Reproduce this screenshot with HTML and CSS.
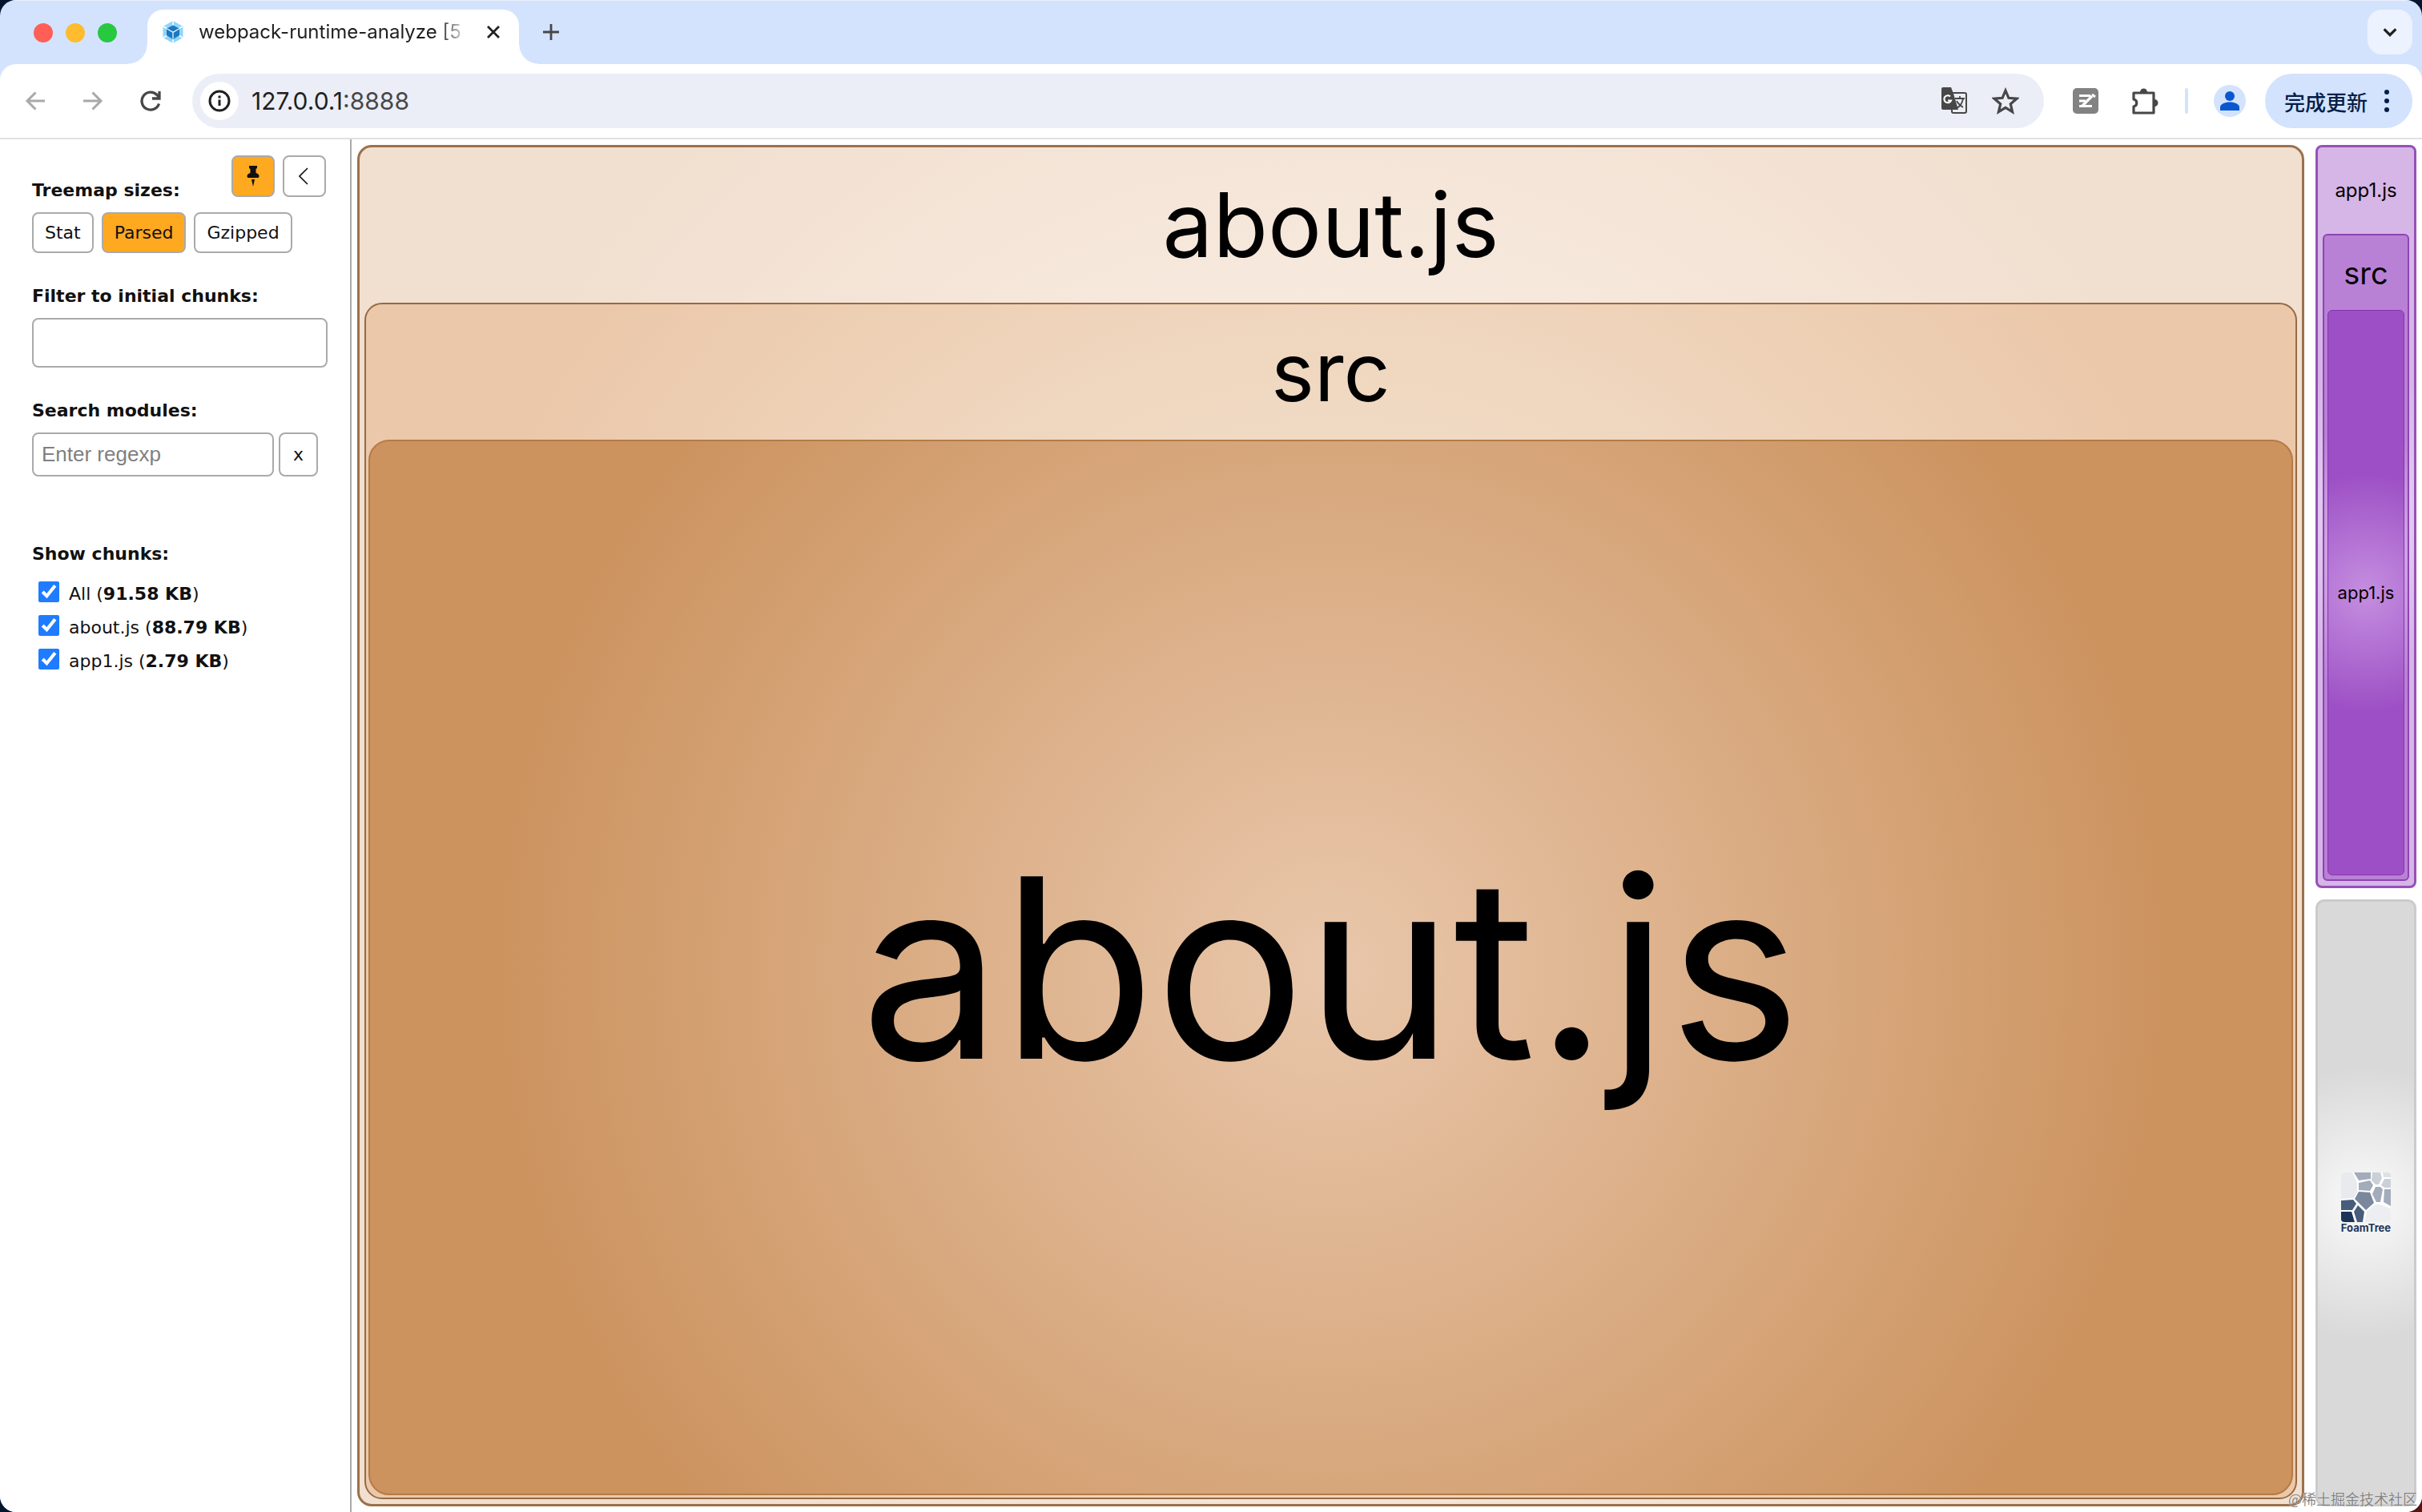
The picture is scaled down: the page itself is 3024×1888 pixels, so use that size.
FILE: index.html
```html
<!DOCTYPE html>
<html lang="zh-CN">
<head>
<meta charset="utf-8">
<title>webpack-runtime-analyze</title>
<link rel="stylesheet" href="styles.css">
</head>
<body>
<div class="window">
  <header class="tabstrip">
    <div class="lights"><span class="light close"></span><span class="light minimise"></span><span class="light zoom"></span></div>
    <div class="tab">
      <svg class="favicon" viewBox="0 0 28 28"><path fill="#8ed6fb" d="M14 0 26.500 7v14L14 28 1.500 21V7z"/><path d="M14 0v7M14 21v7M2 7l5 3M26 7l-5 3M2 21l5-3M26 21l-5-3" stroke="#fff" stroke-width="1.500"/><path fill="#1c78c0" d="m14 5.500 8 4.300v8.500l-8 4.700-8-4.700V9.800z"/><path d="m6.500 10 7.500 4.300L21.500 10M14 14.300V22" fill="none" stroke="#fff" stroke-width="1.200"/></svg>
      <span class="tab-title">webpack-runtime-analyze [5 F</span>
      <button class="icon-button tab-close" aria-label="Close tab"><svg viewBox="0 0 24 24"><path d="m5 5 14 14M19 5 5 19" stroke="#202124" stroke-width="2.800"/></svg></button>
    </div>
    <button class="icon-button new-tab" aria-label="New tab"><svg viewBox="0 0 24 24"><path d="M12 2v20M2 12h20" stroke="#474747" stroke-width="2.800"/></svg></button>
    <button class="icon-button tab-search" aria-label="Search tabs"><svg viewBox="0 0 24 24"><path d="m4 8 8 8 8-8" fill="none" stroke="#1f1f1f" stroke-width="3.500"/></svg></button>
  </header>
  <nav class="toolbar">
    <div class="nav-buttons">
      <button class="icon-button" aria-label="Back"><svg viewBox="0 0 26 26"><path d="M25 13H3M13.500 2.500 3 13l10.500 10.500" fill="none" stroke="#a9a9a9" stroke-width="3"/></svg></button>
      <button class="icon-button" aria-label="Forward"><svg viewBox="0 0 26 26"><path d="M1 13h22M12.500 2.500 23 13 12.500 23.500" fill="none" stroke="#a9a9a9" stroke-width="3"/></svg></button>
      <button class="icon-button" aria-label="Reload"><svg viewBox="0 0 26 26"><path d="M23.500 16.500A11 11 0 1 1 21 5.500l2.500 3M24 1v9h-9" fill="none" stroke="#474747" stroke-width="3.300"/></svg></button>
    </div>
    <div class="omnibox">
      <button class="icon-button site-info" aria-label="Site information"><svg viewBox="0 0 28 28"><circle cx="14" cy="14" r="12" fill="none" stroke="#1f1f1f" stroke-width="3"/><path d="M14 12.500V20M14 7.500v3" stroke="#1f1f1f" stroke-width="3"/></svg></button>
      <span class="url">127.0.0.1<span class="port">:8888</span></span>
      <button class="icon-button" aria-label="Translate"><svg viewBox="0 0 34 34"><rect x="14" y="7" width="18" height="25" rx="2" fill="none" stroke="#474747" stroke-width="2"/><path fill="#474747" d="M3 0h10l3 8 6 20H3a2 2 0 0 1-2-2V2a2 2 0 0 1 2-2z"/><path d="M12 11.500a4.500 4.500 0 1 0 1 5h-4" fill="none" stroke="#fff" stroke-width="2.200"/><path d="M18 14h12M24 11v3M28 14c-1 6-4 10-8 12M20 17c2 4 5 6 8 8" fill="none" stroke="#474747" stroke-width="1.800"/></svg></button>
      <button class="icon-button" aria-label="Bookmark"><svg viewBox="0 0 34 34"><path d="m17 4 3.900 9.300 10 .9-7.600 6.600 2.300 9.800L17 25.400l-8.600 5.200 2.300-9.800-7.600-6.600 10-.9z" fill="none" stroke="#474747" stroke-width="3.200"/></svg></button>
    </div>
    <button class="icon-button extension" aria-label="Notes extension"><svg viewBox="0 0 32 32"><rect width="32" height="32" rx="5" fill="#828282"/><path d="M8 9.500h14M8 16h8M8 22.500h16M24 10 12 22" stroke="#fff" stroke-width="3.200"/><path d="m24 8 4 3" stroke="#fff" stroke-width="3"/></svg></button>
    <button class="icon-button puzzle" aria-label="Extensions"><svg viewBox="0 0 36 36"><path d="M4 8h25v25H4v-8c5-1 5-8 0-9z" fill="none" stroke="#474747" stroke-width="3.200" stroke-linejoin="round"/><path d="M12 7a4.500 4.500 0 0 1 9 0zM30 16a4.500 4.500 0 0 1 0 9z" fill="#474747"/></svg></button>
    <span class="divider"></span>
    <button class="icon-button avatar" aria-label="Profile"><svg viewBox="0 0 24 24"><circle cx="12" cy="6" r="6" fill="#0b57d0"/><path d="M0 24v-4c0-4 6-6.500 12-6.500S24 16 24 20v4z" fill="#0b57d0"/></svg></button>
    <button class="update">完成更新<svg viewBox="0 0 8 28"><circle cx="4" cy="3" r="3"/><circle cx="4" cy="14" r="3"/><circle cx="4" cy="25" r="3"/></svg></button>
  </nav>
  <main class="content">
    <aside class="sidebar">
      <div class="panel-buttons">
        <button class="button square active" aria-label="Pin"><svg viewBox="0 0 16 26"><path d="M3 0h10v3l-1.500 1v5c3 1 4 2 4 4s-1 2-3 2h-9c-2 0-3 0-3-2s1-3 4-4V4L3 3zM6 17h4l-2 9z" fill="#111"/></svg></button>
        <button class="button square" aria-label="Hide sidebar"><svg viewBox="0 0 14 26"><path d="M11 3 1 13l10 10" fill="none" stroke="#111" stroke-width="1.600"/></svg></button>
      </div>
      <section class="group sizes">
        <h2>Treemap sizes:</h2>
        <div class="row size-row"><button class="button">Stat</button><button class="button active">Parsed</button><button class="button">Gzipped</button></div>
      </section>
      <section class="group">
        <label class="heading" for="chunk-filter">Filter to initial chunks:</label>
        <input class="field filter" id="chunk-filter" type="text">
      </section>
      <section class="group search">
        <label class="heading" for="module-search">Search modules:</label>
        <div class="row"><input class="field" id="module-search" type="text" placeholder="Enter regexp"><button class="button clear">x</button></div>
      </section>
      <section class="group">
        <h2>Show chunks:</h2>
        <div class="chunks">
          <label><input type="checkbox" checked><span>All (<b>91.58 KB</b>)</span></label>
          <label><input type="checkbox" checked><span>about.js (<b>88.79 KB</b>)</span></label>
          <label><input type="checkbox" checked><span>app1.js (<b>2.79 KB</b>)</span></label>
        </div>
      </section>
    </aside>
    <section class="treemap">
      <div class="cell about">
        <div class="about-title">about.js</div>
        <div class="cell about-src">
          <div class="src-title">src</div>
          <div class="cell about-leaf">about.js</div>
        </div>
      </div>
      <div class="side">
        <div class="cell app">
          <div class="app-title">app1.js</div>
          <div class="cell app-src">
            <div class="app-src-title">src</div>
            <div class="cell app-leaf">app1.js</div>
          </div>
        </div>
        <div class="cell brand">
          <svg class="foam" viewBox="0 0 62 62"><defs><clipPath id="foam-clip"><rect width="62" height="62" rx="4"/></clipPath></defs><g clip-path="url(#foam-clip)"><rect width="62" height="62" fill="#fff"/><path fill="#e8eaed" d="M0 0h14l6 13v11l-4 8-16 1z"/><path fill="#a2acba" d="M16 0h21v8l-15 2z"/><path fill="#cbd0d8" d="M39 0h10l2 7-4 8h-4l-5-5z"/><path fill="#dde1e6" d="M52 0h10v6h-9z"/><path fill="#cbd0d8" d="M54 8h8v11h-8l-4-3z"/><path fill="#a2acba" d="m22 13 14-3 4 6-4 7-14-1zM43 18h6l3 3-3 16h-5l-5-10zM54 21h8v21l-9-5z"/><path fill="#7a879c" d="m22 24 14 1 5 13-10 9-14-14z"/><path fill="#485d7b" d="m0 35 15-1 4 5-5 8H0zM21 41l8 8-2 13h-7l-4-13z"/><path fill="#1d3459" d="M0 49h13l4 13H0z"/><path fill="#eceef1" d="m32 49 10-9h7l13 5v17H29z"/></g></svg>
          <span class="foam-name">FoamTree</span>
        </div>
      </div>
    </section>
  </main>
  <div class="watermark">@稀土掘金技术社区</div>
</div>
</body>
</html>
```
FILE: styles.css
```css
* { box-sizing: border-box; }
html { height: 100%; background: radial-gradient(circle at 100% 100%, #5a1410 0, #04162e 200px); }
body { margin: 0; height: 100%; font-family: Inter, "Noto Sans CJK SC", sans-serif; color: #111; }
button { font: inherit; color: inherit; border: 0; background: none; padding: 0; margin: 0; }
svg { display: block; }
h2 { margin: 0; }

.window { position: relative; height: 100%; display: flex; flex-direction: column; background: #d3e3fd; border-radius: 20px; overflow: hidden; }
.icon-button { display: flex; align-items: center; justify-content: center; flex: none; }
.icon-button svg { width: 100%; height: 100%; }

.tabstrip { flex: none; height: 80px; display: flex; align-items: flex-start; padding: 11px 12px 0 42px; border-top: 1px solid #eaf1fe; }
.lights { display: flex; gap: 16px; padding-top: 17px; width: 142px; }
.light { width: 24px; height: 24px; border-radius: 50%; }
.close { background: #ff5f57; }
.minimise { background: #febc2e; }
.zoom { background: #28c840; }
.tab { position: relative; width: 464px; height: 68px; display: flex; align-items: center; padding: 0 20px 12px 18px; background: #fff; border-radius: 20px 20px 0 0; }
.tab::before, .tab::after { content: ""; position: absolute; bottom: 0; width: 24px; height: 24px; }
.tab::before { left: -24px; background: radial-gradient(circle at 0 0, transparent 23px, #fff 24px); }
.tab::after { right: -24px; background: radial-gradient(circle at 100% 0, transparent 23px, #fff 24px); }
.favicon { width: 28px; height: 28px; flex: none; }
.tab-title { flex: 1; margin-left: 18px; font-size: 24px; line-height: 32px; white-space: nowrap; overflow: hidden; color: #1f1f1f; -webkit-mask-image: linear-gradient(90deg, #000 300px, transparent 336px); mask-image: linear-gradient(90deg, #000 300px, transparent 336px); }
.tab-close { width: 24px; height: 24px; }
.new-tab { width: 24px; height: 24px; margin: 16px 0 0 28px; }
.tab-search { width: 56px; height: 56px; margin-left: auto; padding: 17px; border-radius: 18px; background: #ecf2fe; }

.toolbar { flex: none; height: 94px; display: flex; align-items: center; padding: 0 12px 0 31px; background: #fff; border-radius: 20px 20px 0 0; border-bottom: 2px solid #e1e1e1; }
.nav-buttons { display: flex; gap: 46px; width: 209px; }
.nav-buttons .icon-button { width: 26px; height: 26px; }
.omnibox { flex: 1; height: 68px; display: flex; align-items: center; padding: 0 31px 0 10px; background: #ebeef7; border-radius: 34px; gap: 30px; }
.omnibox .icon-button { width: 34px; height: 34px; }
.omnibox .site-info { width: 48px; height: 48px; padding: 10px; border-radius: 50%; background: #fff; }
.url { flex: 1; margin-left: -14px; font-size: 30px; color: #1f1f1f; }
.port { color: #474747; }
.extension { width: 32px; height: 32px; margin-left: 36px; }
.puzzle { width: 36px; height: 36px; margin-left: 40px; }
.divider { width: 4px; height: 32px; margin-left: 32px; border-radius: 2px; background: #d3e3fd; }
.avatar { width: 40px; height: 40px; margin-left: 32px; padding: 8px; border-radius: 50%; background: #d3e3fd; }
.update { width: 184px; height: 68px; margin-left: 24px; display: flex; align-items: center; gap: 20px; padding-left: 24px; border-radius: 34px; background: #d3e3fd; color: #041e49; font: 500 26px "Noto Sans CJK SC", sans-serif; white-space: nowrap; }
.update svg { width: 8px; height: 28px; fill: #041e49; }

.content { flex: 1; min-height: 0; display: flex; background: #fff; }
.sidebar { position: relative; flex: none; width: 439px; padding: 51px 28px 0 40px; border-right: 2px solid #aaa; font: 22px/26px "DejaVu Sans", sans-serif; }
.panel-buttons { position: absolute; top: 20px; right: 30px; display: flex; gap: 10px; }
.button { height: 51px; padding: 0 14px; border: 2px solid #aaa; border-radius: 8px; background: #fff; }
.active { background: #ffa921; }
.square { width: 54px; height: 52px; padding: 0; display: flex; align-items: center; justify-content: center; }
.square svg { height: 26px; }
.group { margin-bottom: 41px; }
.group h2, .heading { display: block; font-size: 22px; font-weight: bold; line-height: 26px; margin-bottom: 14px; }
.row { display: flex; gap: 6px; }
.size-row { gap: 10px; }
.field { width: 302px; height: 55px; padding: 0 10px; border: 2px solid #aaa; border-radius: 8px; background: #fff; font: 26px "Liberation Sans", sans-serif; }
.field::placeholder { color: #808080; }
.filter { display: block; width: 369px; height: 62px; }
.clear { width: 49px; height: 55px; }
.search { margin-bottom: 84px; }
.chunks label { display: flex; align-items: center; gap: 12px; height: 42px; padding: 4px 0 0 8px; }
.chunks input { width: 26px; height: 26px; margin: 0 0 6px; accent-color: #1f7cff; }

.treemap { flex: 1; min-width: 0; display: flex; gap: 14px; padding: 7px; color: #000; }
.cell { display: flex; flex-direction: column; min-height: 0; text-align: center; border-style: solid; }
.about { flex: 1; padding: 0 6px 6px; border: 3px solid #9b714b; border-radius: 18px; background: radial-gradient(circle, #fff5f0 0, #f1dfcf 1180px); }
.about-title { height: 194px; font-size: 112px; line-height: 192px; }
.about-src { flex: 1; padding: 0 3px 3px; border: 2px solid #966a43; border-radius: 22px; background: radial-gradient(circle, #f8e6dc 0, #f0d9c2 620px, #ebc8aa 1160px); }
.src-title { height: 169px; font-size: 102px; line-height: 169px; }
.about-leaf { flex: 1; justify-content: center; border: 2px solid #b57b46; border-radius: 26px; background: radial-gradient(circle, #e9c7ab 0, #cc935f 1040px); font-size: 313px; line-height: 360px; }
.side { width: 126px; display: flex; flex-direction: column; gap: 14px; }
.app { flex: 926 1 0; padding: 0 6px 6px; border: 3px solid #9651b8; border-radius: 8px; background: radial-gradient(circle, #e8d2f4 0, #d6b5e7 180px); }
.app-title { height: 108px; font-size: 24px; line-height: 108px; }
.app-src { flex: 1; padding: 0 4px 5px; border: 2px solid #8e44b3; border-radius: 6px; background: radial-gradient(circle, #d8b0ea 0, #b981d6 160px); }
.app-src-title { height: 93px; font-size: 38px; line-height: 95px; }
.app-leaf { flex: 1; justify-content: center; border: 1px solid #8536ad; border-radius: 6px; background: radial-gradient(circle, #c58ee0 0, #9d50c5 148px); font-size: 22px; line-height: 28px; }
.brand { flex: 760 1 0; align-items: center; justify-content: center; border: 3px solid #cbcbcb; border-radius: 11px; background: radial-gradient(circle, #fafafa 0, #d9d9d9 170px); }
.foam { width: 62px; height: 62px; }
.foam-name { font: bold 13px/15px Inter, sans-serif; color: #1d3459; }
.watermark { position: absolute; right: 6px; bottom: 4px; font: 18px/26px "Noto Sans CJK SC", sans-serif; color: rgba(100, 100, 100, 0.8); text-shadow: 0 0 1px #fff; }
```
